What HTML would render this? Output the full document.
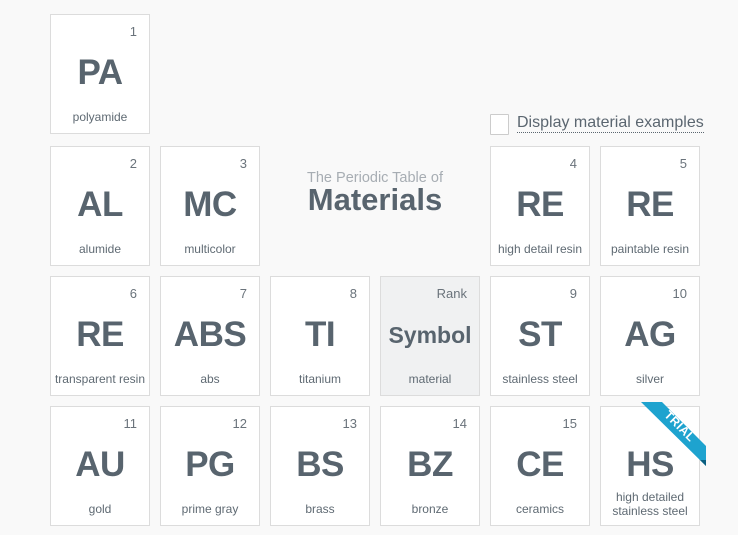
<!DOCTYPE html>
<html><head><meta charset="utf-8"><style>
body{margin:0;width:738px;height:535px;background:#f9f9f9;font-family:"Liberation Sans","DejaVu Sans",sans-serif;color:#5b6670;position:relative;overflow:hidden}
.t{position:absolute;width:98px;height:118px;background:#fff;border:1px solid #dcdcdc;box-sizing:content-box}
.n{position:absolute;right:12px;top:9px;font-size:13px;color:#6a737b}
.s{position:absolute;left:0;right:0;top:38px;text-align:center;font-size:35px;font-weight:bold;letter-spacing:-0.5px;color:#58646e}
.l{position:absolute;left:0;right:0;top:95px;text-align:center;font-size:12px;color:#5f6a73;line-height:14px}
.r{background:#f0f1f2}
</style></head><body>
<div class="t" style="left:50px;top:14px"><div class="n">1</div><div class="s">PA</div><div class="l">polyamide</div></div>

<div style="position:absolute;left:490px;top:114px;width:17px;height:19px;border:1px solid #ccc;background:#fff;border-radius:1px"></div>
<div style="position:absolute;left:517px;top:114px;font-size:16px;color:#5b6670;border-bottom:1px dotted #5b6670;line-height:18px">Display material examples</div>

<div style="position:absolute;left:290px;top:170px;width:170px;text-align:center;font-size:14.5px;color:#a7adb3;line-height:16px">The Periodic Table of</div>
<div style="position:absolute;left:290px;top:182px;width:170px;text-align:center;font-size:31px;font-weight:bold;color:#58646e;line-height:36px">Materials</div>

<div class="t" style="left:50px;top:146px"><div class="n">2</div><div class="s">AL</div><div class="l">alumide</div></div>
<div class="t" style="left:160px;top:146px"><div class="n">3</div><div class="s">MC</div><div class="l">multicolor</div></div>
<div class="t" style="left:490px;top:146px"><div class="n">4</div><div class="s">RE</div><div class="l">high detail resin</div></div>
<div class="t" style="left:600px;top:146px"><div class="n">5</div><div class="s">RE</div><div class="l">paintable resin</div></div>

<div class="t" style="left:50px;top:276px"><div class="n">6</div><div class="s">RE</div><div class="l">transparent resin</div></div>
<div class="t" style="left:160px;top:276px"><div class="n">7</div><div class="s">ABS</div><div class="l">abs</div></div>
<div class="t" style="left:270px;top:276px"><div class="n">8</div><div class="s">TI</div><div class="l">titanium</div></div>
<div class="t r" style="left:380px;top:276px"><div class="n">Rank</div><div class="s" style="font-size:23px;top:45px;letter-spacing:0">Symbol</div><div class="l">material</div></div>
<div class="t" style="left:490px;top:276px"><div class="n">9</div><div class="s">ST</div><div class="l">stainless steel</div></div>
<div class="t" style="left:600px;top:276px"><div class="n">10</div><div class="s">AG</div><div class="l">silver</div></div>

<div class="t" style="left:50px;top:406px"><div class="n">11</div><div class="s">AU</div><div class="l">gold</div></div>
<div class="t" style="left:160px;top:406px"><div class="n">12</div><div class="s">PG</div><div class="l">prime gray</div></div>
<div class="t" style="left:270px;top:406px"><div class="n">13</div><div class="s">BS</div><div class="l">brass</div></div>
<div class="t" style="left:380px;top:406px"><div class="n">14</div><div class="s">BZ</div><div class="l">bronze</div></div>
<div class="t" style="left:490px;top:406px"><div class="n">15</div><div class="s">CE</div><div class="l">ceramics</div></div>
<div class="t" style="left:600px;top:406px"><div class="s">HS</div><div class="l" style="top:83px">high detailed<br>stainless steel</div></div>

<svg style="position:absolute;left:0;top:0" width="738" height="535">
<polygon points="641,402 662,402 706,446 706,466" fill="#1ea3cf"/>
<polygon points="700,460 706,460 706,466" fill="#0b5f80"/>
<text x="0" y="0" transform="translate(677,429) rotate(45)" text-anchor="middle" font-size="12" font-weight="bold" fill="#fff" font-family="Liberation Sans, sans-serif" letter-spacing="0.5">TRIAL</text>
</svg>
</body></html>
